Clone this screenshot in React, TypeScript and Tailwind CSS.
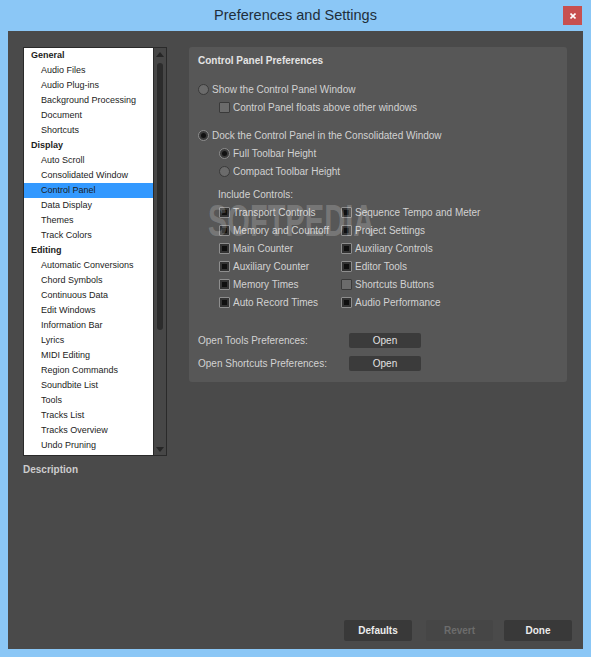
import React from 'react';

const sections = [
  { title: 'General', items: ['Audio Files', 'Audio Plug-ins', 'Background Processing', 'Document', 'Shortcuts'] },
  { title: 'Display', items: ['Auto Scroll', 'Consolidated Window', 'Control Panel', 'Data Display', 'Themes', 'Track Colors'] },
  {
    title: 'Editing',
    items: [
      'Automatic Conversions',
      'Chord Symbols',
      'Continuous Data',
      'Edit Windows',
      'Information Bar',
      'Lyrics',
      'MIDI Editing',
      'Region Commands',
      'Soundbite List',
      'Tools',
      'Tracks List',
      'Tracks Overview',
      'Undo Pruning',
    ],
  },
];

const controls: [string, boolean, string, boolean][] = [
  ['Transport Controls', true, 'Sequence Tempo and Meter', true],
  ['Memory and Countoff', true, 'Project Settings', true],
  ['Main Counter', true, 'Auxiliary Controls', true],
  ['Auxiliary Counter', true, 'Editor Tools', true],
  ['Memory Times', true, 'Shortcuts Buttons', false],
  ['Auto Record Times', true, 'Audio Performance', true],
];

function Radio({ checked }: { checked?: boolean }) {
  if (checked) {
    return (
      <span className="w-[11px] h-[11px] rounded-full border border-[#8e8e8e] bg-[#3a3a3a] flex items-center justify-center shrink-0">
        <span className="w-[5px] h-[5px] rounded-full bg-[#111]" />
      </span>
    );
  }
  return <span className="w-[11px] h-[11px] rounded-full border border-[#3a3a3a] bg-[#6b6b6b] shrink-0" />;
}

function Check({ checked }: { checked?: boolean }) {
  if (checked) {
    return (
      <span className="w-[11px] h-[11px] rounded-[1px] border border-[#8e8e8e] bg-[#333] flex items-center justify-center shrink-0">
        <span className="w-[5px] h-[5px] bg-[#0f0f0f]" />
      </span>
    );
  }
  return <span className="w-[11px] h-[11px] rounded-[1px] border border-[#3a3a3a] bg-[#6b6b6b] shrink-0" />;
}

function PrefList() {
  return (
    <div className="h-[409px] flex border border-[#2a2a2a]">
      <div className="w-[129px] bg-white text-[9px] text-[#1c1c1c]">
        {sections.map((sec) => (
          <div key={sec.title}>
            <div className="h-[15px] leading-[15px] pl-[7px] font-bold">{sec.title}</div>
            {sec.items.map((item) => (
              <div
                key={item}
                className={`h-[15px] leading-[15px] pl-[17px] ${item === 'Control Panel' ? 'bg-[#3399ff]' : ''}`}
              >
                {item}
              </div>
            ))}
          </div>
        ))}
      </div>
      {/* scrollbar */}
      <div className="flex-1 bg-[#474747] border-l border-[#2a2a2a] flex flex-col items-center pt-[4px] pb-[3px]">
        <svg width="8" height="5" viewBox="0 0 8 5">
          <path d="M0 5L4 0L8 5Z" fill="#262626" />
        </svg>
        <div className="mt-[6px] w-[6px] h-[267px] rounded-full bg-[#2c2c2c]" />
        <div className="flex-1" />
        <svg width="8" height="5" viewBox="0 0 8 5">
          <path d="M0 0L8 0L4 5Z" fill="#262626" />
        </svg>
      </div>
    </div>
  );
}

function ControlPanelPrefs() {
  return (
    <div className="relative w-[378px] h-[335px] bg-[#575757] rounded-[3px] pt-[4px] pl-[9px] text-[10px] text-[#d2d2d2]">
      <div className="h-[18px] flex items-center font-bold text-[#e4e4e4]">Control Panel Preferences</div>

      <div className="mt-[11px] h-[18px] flex items-center gap-[3px]">
        <Radio />
        <span>Show the Control Panel Window</span>
      </div>
      <div className="h-[18px] flex items-center gap-[3px] pl-[21px]">
        <Check />
        <span>Control Panel floats above other windows</span>
      </div>

      <div className="mt-[10px] h-[18px] flex items-center gap-[3px]">
        <Radio checked />
        <span>Dock the Control Panel in the Consolidated Window</span>
      </div>
      <div className="h-[18px] flex items-center gap-[3px] pl-[21px]">
        <Radio checked />
        <span>Full Toolbar Height</span>
      </div>
      <div className="h-[18px] flex items-center gap-[3px] pl-[21px]">
        <Radio />
        <span>Compact Toolbar Height</span>
      </div>

      <div className="mt-[5px] h-[18px] flex items-center pl-[20px]">Include Controls:</div>
      <div className="pl-[21px]">
        {controls.map(([a, ca, b, cb]) => (
          <div key={a} className="h-[18px] flex items-center">
            <div className="w-[122px] flex items-center gap-[3px]">
              <Check checked={ca} />
              <span className="whitespace-nowrap">{a}</span>
            </div>
            <div className="flex items-center gap-[3px]">
              <Check checked={cb} />
              <span>{b}</span>
            </div>
          </div>
        ))}
      </div>

      <div className="mt-[22px] h-[15px] flex items-center">
        <span className="w-[151px]">Open Tools Preferences:</span>
        <button className="w-[72px] h-[15px] rounded-[2px] bg-[#3b3b3b] text-[#e2e2e2] leading-[15px]">Open</button>
      </div>
      <div className="mt-[8px] h-[15px] flex items-center">
        <span className="w-[151px]">Open Shortcuts Preferences:</span>
        <button className="w-[72px] h-[15px] rounded-[2px] bg-[#3b3b3b] text-[#e2e2e2] leading-[15px]">Open</button>
      </div>

      {/* watermark overlay */}
      <div className="absolute left-[19px] top-[152px] text-[44px] leading-[44px] font-bold text-white/20 origin-left scale-x-[0.66] pointer-events-none whitespace-nowrap">
        SOFTPEDIA
      </div>
    </div>
  );
}

export default function App() {
  return (
    <div className="w-[591px] h-[657px] bg-[#8bc7f6] flex flex-col font-['Liberation_Sans',Arial,sans-serif]">
      {/* title bar */}
      <div className="relative h-[31px] flex items-center justify-center shrink-0">
        <span className="text-[14.5px] text-[#1f2e3b]">Preferences and Settings</span>
        <button className="absolute right-[9px] top-[6px] w-[19px] h-[19px] bg-[#c75050] flex items-center justify-center">
          <svg width="6" height="6" viewBox="0 0 6 6">
            <path d="M0.5 0.5L5.5 5.5M5.5 0.5L0.5 5.5" stroke="white" strokeWidth="1.6" />
          </svg>
        </button>
      </div>

      {/* window content */}
      <div className="mx-[8px] mb-[8px] flex-1 bg-[#4a4a4a] flex flex-col pt-[16px] pl-[15px] pr-[16px]">
        <div className="flex gap-[22px]">
          <div className="w-[144px]">
            <PrefList />
            <div className="mt-[8px] h-[12px] leading-[12px] text-[10px] font-bold text-[#cdcdcd]">Description</div>
          </div>
          <ControlPanelPrefs />
        </div>

        <div className="mt-auto mb-[8px] flex justify-end text-[10px] font-bold -mr-[5px]">
          <button className="w-[68px] h-[21px] rounded-[2px] bg-[#393939] text-[#ececec]">Defaults</button>
          <button className="ml-[14px] w-[67px] h-[21px] rounded-[2px] bg-[#464646] text-[#6c6c6c]">Revert</button>
          <button className="ml-[11px] w-[68px] h-[21px] rounded-[2px] bg-[#393939] text-[#ececec]">Done</button>
        </div>
      </div>
    </div>
  );
}
